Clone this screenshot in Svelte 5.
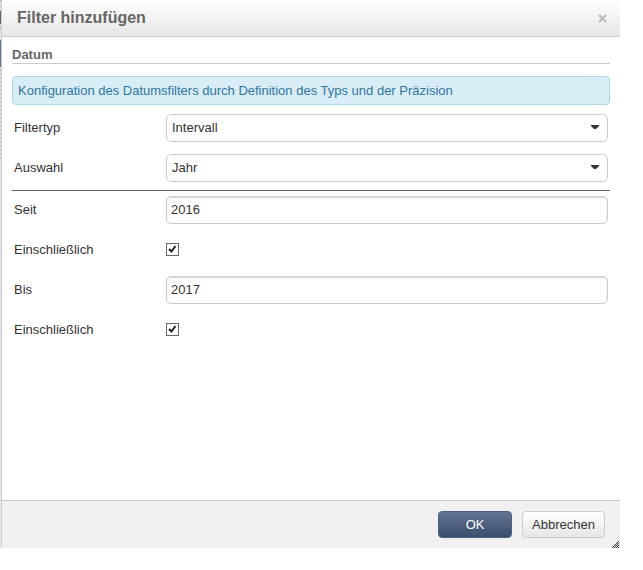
<script>
  let filterType = $state('Intervall');
  let selection = $state('Jahr');
  let from = $state('2016');
  let to = $state('2017');
  let fromIncluded = $state(true);
  let toIncluded = $state(true);
</script>

{#snippet caret()}
  <svg class="caret" viewBox="0 0 8 4" aria-hidden="true"><path d="M0 0h8v1L5 4H3L0 1z" /></svg>
{/snippet}

{#snippet tick()}
  <svg class="tick" viewBox="0 0 13 13" aria-hidden="true">
    <path d="M3 6l2.5 2.5L9.5 3" />
  </svg>
{/snippet}

<div class="page">
  <div class="backdrop" aria-hidden="true">
    <i class="toolbar"></i><i class="gap"></i><i class="selected"></i><i class="dots"></i>
  </div>
  <div class="dialog" role="dialog" aria-labelledby="dialog-title">
    <header>
      <h1 id="dialog-title">Filter hinzufügen</h1>
      <button class="close" type="button" aria-label="Schließen">
        <svg viewBox="0 0 9 9"><path d="M1 1l7 7M8 1L1 8" /></svg>
      </button>
    </header>

    <main>
      <h2>Datum</h2>
      <p class="info">Konfiguration des Datumsfilters durch Definition des Typs und der Präzision</p>

      <div class="row">
        <label for="type">Filtertyp</label>
        <div class="select">
          <select id="type" bind:value={filterType}>
            <option>Intervall</option>
          </select>
          {@render caret()}
        </div>
      </div>
      <div class="row">
        <label for="selection">Auswahl</label>
        <div class="select">
          <select id="selection" bind:value={selection}>
            <option>Jahr</option>
          </select>
          {@render caret()}
        </div>
      </div>
      <hr />
      <div class="row">
        <label for="from">Seit</label>
        <input id="from" type="text" bind:value={from} />
      </div>
      <div class="row">
        <label for="from-included">Einschließlich</label>
        <div class="check">
          <input id="from-included" type="checkbox" bind:checked={fromIncluded} />
          {#if fromIncluded}{@render tick()}{/if}
        </div>
      </div>
      <div class="row">
        <label for="to">Bis</label>
        <input id="to" type="text" bind:value={to} />
      </div>
      <div class="row">
        <label for="to-included">Einschließlich</label>
        <div class="check">
          <input id="to-included" type="checkbox" bind:checked={toIncluded} />
          {#if toIncluded}{@render tick()}{/if}
        </div>
      </div>
    </main>

    <footer>
      <button class="btn primary" type="button">OK</button>
      <button class="btn" type="button">Abbrechen</button>
      <svg class="grip" viewBox="0 0 8 8" shape-rendering="crispEdges" aria-hidden="true">
        <path d="M0 7h1v1H0zM1 6h1v1H1zM2 5h1v1H2zM3 4h1v1H3zM4 3h1v1H4zM5 2h1v1H5zM6 1h1v1H6zM2 7h1v1H2zM3 6h1v1H3zM4 5h1v1H4zM5 4h1v1H5zM6 3h1v1H6zM4 7h1v1H4zM5 6h1v1H5zM6 5h1v1H6zM6 7h1v1H6z" />
      </svg>
    </footer>
  </div>
</div>

<style>
  :global(body) {
    margin: 0;
    background: #fff;
  }
  * {
    box-sizing: border-box;
  }
  .page {
    display: flex;
    min-height: 100vh;
    padding: 0 23px 22px 0;
    font: 13px/20px "Liberation Sans", Arial, Helvetica, sans-serif;
    color: #333;
  }
  .backdrop {
    display: flex;
    flex-direction: column;
    width: 1px;
    background: #e6e6e6;
  }
  .toolbar {
    height: 29px;
    background: linear-gradient(#999 0 1px, #ddd 1px 11px, #666 11px 24px, #ddd 24px 28px, #999 28px);
  }
  .gap {
    height: 11px;
  }
  .selected {
    height: 27px;
    background: #5f7293;
  }
  .dots {
    height: 93px;
    background: repeating-linear-gradient(#e6e6e6 0 2px, #c4c4c4 2px 4px);
  }
  .dialog {
    flex: 1;
    display: flex;
    flex-direction: column;
    border-left: 1px solid #ccc;
    border-bottom-left-radius: 3px;
    overflow: hidden;
  }
  header {
    display: flex;
    align-items: center;
    justify-content: space-between;
    height: 37px;
    padding: 0 13px 0 15px;
    border-bottom: 1px solid #ccc;
    background: linear-gradient(#fff, #e6e6e6);
  }
  h1 {
    margin: 0;
    font-size: 16px;
    line-height: 20px;
    color: #666;
  }
  .close {
    display: flex;
    padding: 0;
    border: 0;
    background: none;
  }
  .close svg {
    width: 9px;
    height: 9px;
    fill: none;
    stroke: #bbb;
    stroke-width: 2;
  }
  main {
    flex: 1;
    padding: 10px;
  }
  h2 {
    margin: 0 0 12px;
    border-bottom: 1px solid #ccc;
    font-size: 13px;
    line-height: 16px;
    color: #666;
  }
  .info {
    margin: 0 0 3px;
    padding: 4px 5px;
    border: 1px solid #a9dbe3;
    border-radius: 4px;
    background: #d9edf7;
    line-height: 19px;
    color: #2f76a0;
  }
  .row {
    display: flex;
    align-items: center;
    height: 40px;
    padding: 0 2px;
  }
  label {
    width: 152px;
  }
  hr {
    height: 1px;
    margin: 2px 0 -1px;
    border: 0;
    background: #666;
  }
  .select {
    flex: 1;
    position: relative;
    display: flex;
  }
  select,
  input[type="text"] {
    flex: 1;
    min-width: 0;
    height: 28px;
    padding: 0 4px 2px;
    border: 1px solid #ccc;
    border-radius: 5px;
    background: #fff;
    font: inherit;
    color: #333;
  }
  select {
    appearance: none;
    padding: 0 20px 0 5px;
  }
  input[type="text"] {
    box-shadow: inset 0 1px 2px rgba(0, 0, 0, 0.16);
  }
  .caret {
    position: absolute;
    top: 11px;
    right: 9px;
    width: 8px;
    height: 4px;
    fill: #333;
    pointer-events: none;
  }
  .check {
    position: relative;
    display: flex;
    height: 15px;
  }
  input[type="checkbox"] {
    appearance: none;
    width: 13px;
    height: 13px;
    margin: 0;
    border: 1px solid #666;
    background: #fff;
  }
  .tick {
    position: absolute;
    top: 0;
    left: 0;
    width: 13px;
    height: 13px;
    fill: none;
    stroke: #222;
    stroke-width: 2;
    pointer-events: none;
  }
  footer {
    position: relative;
    display: flex;
    justify-content: flex-end;
    gap: 10px;
    padding: 10px 15px;
    border-top: 1px solid #ccc;
    background: #f1f1f1;
  }
  .btn {
    height: 27px;
    padding: 0 9px;
    border: 1px solid #ccc;
    border-radius: 4px;
    background: linear-gradient(#fff, #e6e6e6);
    font: inherit;
    color: #333;
  }
  .primary {
    min-width: 74px;
    border-color: #4d6182;
    background: linear-gradient(#62748f, #3b4e6e);
    color: #fff;
  }
  .grip {
    position: absolute;
    right: 0;
    bottom: 0;
    width: 8px;
    height: 8px;
    fill: #333;
  }
</style>
